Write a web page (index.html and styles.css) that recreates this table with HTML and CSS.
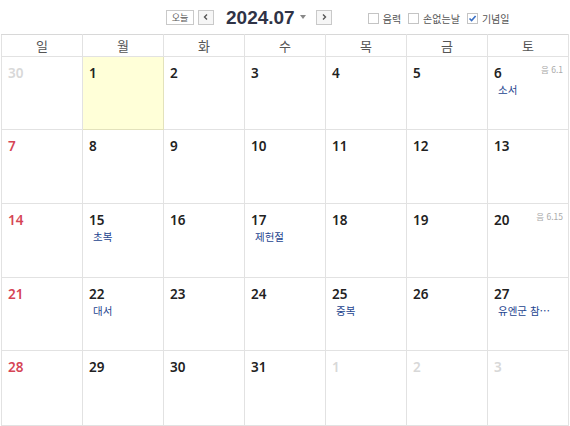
FILE: index.html
```html
<!DOCTYPE html>
<html lang="ko">
<head>
<meta charset="utf-8">
<link rel="stylesheet" href="styles.css">
</head>
<body>
<div class="topbar">
  <button class="btn today">오늘</button>
  <button class="btn arrow"><svg width="8" height="8" viewBox="0 0 8 8"><path d="M5 1.5 L2.5 4 L5 6.5" fill="none" stroke="#555" stroke-width="1.4"/></svg></button>
  <span class="month">2024.07</span>
  <span class="caret"></span>
  <button class="btn arrow next"><svg width="8" height="8" viewBox="0 0 8 8"><path d="M3 1.5 L5.5 4 L3 6.5" fill="none" stroke="#555" stroke-width="1.4"/></svg></button>
  <div class="opts">
    <label class="opt"><span class="box"></span>음력</label>
    <label class="opt"><span class="box"></span>손없는날</label>
    <label class="opt"><span class="box checked"><svg width="9" height="9" viewBox="0 0 9 9"><path d="M1.5 4.5 L3.6 6.6 L7.6 2" fill="none" stroke="#3a6fc4" stroke-width="1.6"/></svg></span>기념일</label>
  </div>
</div>
<table class="cal">
  <thead>
    <tr><th>일</th><th>월</th><th>화</th><th>수</th><th>목</th><th>금</th><th>토</th></tr>
  </thead>
  <tbody>
    <tr class="r73">
      <td><span class="d other">30</span></td>
      <td class="today-cell"><span class="d">1</span></td>
      <td><span class="d">2</span></td>
      <td><span class="d">3</span></td>
      <td><span class="d">4</span></td>
      <td><span class="d">5</span></td>
      <td><span class="d">6</span><span class="lunar">음 6.1</span><div class="ev">소서</div></td>
    </tr>
    <tr>
      <td><span class="d sun">7</span></td>
      <td><span class="d">8</span></td>
      <td><span class="d">9</span></td>
      <td><span class="d">10</span></td>
      <td><span class="d">11</span></td>
      <td><span class="d">12</span></td>
      <td><span class="d">13</span></td>
    </tr>
    <tr>
      <td><span class="d sun">14</span></td>
      <td><span class="d">15</span><div class="ev">초복</div></td>
      <td><span class="d">16</span></td>
      <td><span class="d">17</span><div class="ev">제헌절</div></td>
      <td><span class="d">18</span></td>
      <td><span class="d">19</span></td>
      <td><span class="d">20</span><span class="lunar">음 6.15</span></td>
    </tr>
    <tr class="r73">
      <td><span class="d sun">21</span></td>
      <td><span class="d">22</span><div class="ev">대서</div></td>
      <td><span class="d">23</span></td>
      <td><span class="d">24</span></td>
      <td><span class="d">25</span><div class="ev">중복</div></td>
      <td><span class="d">26</span></td>
      <td><span class="d">27</span><div class="ev short">유엔군 참전의 날</div></td>
    </tr>
    <tr class="r75">
      <td><span class="d sun">28</span></td>
      <td><span class="d">29</span></td>
      <td><span class="d">30</span></td>
      <td><span class="d">31</span></td>
      <td><span class="d other">1</span></td>
      <td><span class="d other">2</span></td>
      <td><span class="d other">3</span></td>
    </tr>
  </tbody>
</table>
</body>
</html>
```
FILE: styles.css
```css
* { box-sizing: border-box; }
html, body { margin: 0; padding: 0; background: #fff; }
body {
  font-family: "Noto Sans", "Noto Sans CJK KR", sans-serif;
  color: #222;
  width: 570px;
  height: 426px;
  overflow: hidden;
}
.topbar {
  height: 34px;
  display: flex;
  align-items: center;
  padding-left: 166px;
}
.btn {
  height: 15px;
  border: 1px solid #c9c9c9;
  background: #fff;
  padding: 0;
  margin: 0;
  display: flex;
  align-items: center;
  justify-content: center;
  font-family: "Noto Sans CJK KR", sans-serif;
  font-size: 9px;
  color: #555;
  line-height: 1;
}
.today { width: 28px; }
.arrow { width: 16px; margin-left: 4px; background: #f6f6f6; }
.month {
  margin-left: 12px;
  font-family: "Liberation Sans", Arial, sans-serif;
  font-weight: bold;
  font-size: 19px;
  color: #2f3346;
  line-height: 1;
}
.caret {
  margin-left: 5px;
  width: 0; height: 0;
  border-left: 3.5px solid transparent;
  border-right: 3.5px solid transparent;
  border-top: 4px solid #888;
}
.next { margin-left: 10px; }
.opts {
  display: flex;
  align-items: center;
  margin-left: 36px;
  margin-top: 3px;
}
.opt {
  display: flex;
  align-items: center;
  font-family: "Noto Sans CJK KR", sans-serif;
  font-size: 10px;
  color: #555;
  margin-right: 7px;
}
.box {
  width: 11px; height: 11px;
  border: 1px solid #c4c4c4;
  background: #fff;
  margin-right: 4px;
  display: flex;
  align-items: center;
  justify-content: center;
}
.cal {
  border-collapse: collapse;
  table-layout: fixed;
  width: 567px;
  margin-left: 1px;
}
.cal th, .cal td {
  border: 1px solid #e2e2e2;
  width: 81px;
}
.cal th {
  height: 22px;
  font-family: "Noto Sans CJK KR", sans-serif;
  font-weight: normal;
  font-size: 13px;
  color: #555;
  padding: 0;
  line-height: 19px;
}
.cal td {
  height: 74px;
  vertical-align: top;
  padding: 4px 6px 0 6px;
  position: relative;
}
.cal tr.r73 td { height: 73px; }
.cal tr.r75 td { height: 75px; }
.cal tr:first-child th { border-top-color: #d8d8d8; }
.today-cell { background: #ffffd8; }
.cal td.today-cell { border: 1px solid #e3e2bc; }
.d {
  font-family: "Noto Sans", sans-serif;
  font-size: 13.5px;
  font-weight: 600;
  color: #222;
  line-height: 18px;
}
.d.sun { color: #d64555; }
.d.other { color: #d8d8d8; }
.lunar {
  position: absolute;
  right: 5px;
  top: 6px;
  font-family: "Noto Sans CJK KR", sans-serif;
  font-size: 8.5px;
  color: #aaa;
}
.ev {
  font-family: "Noto Sans CJK KR", sans-serif;
  font-size: 10.5px;
  color: #24458f;
  padding-left: 4px;
  white-space: nowrap;
  overflow: hidden;
  text-overflow: ellipsis;
  line-height: 14px;
}
.ev.short { max-width: 60px; }
```
